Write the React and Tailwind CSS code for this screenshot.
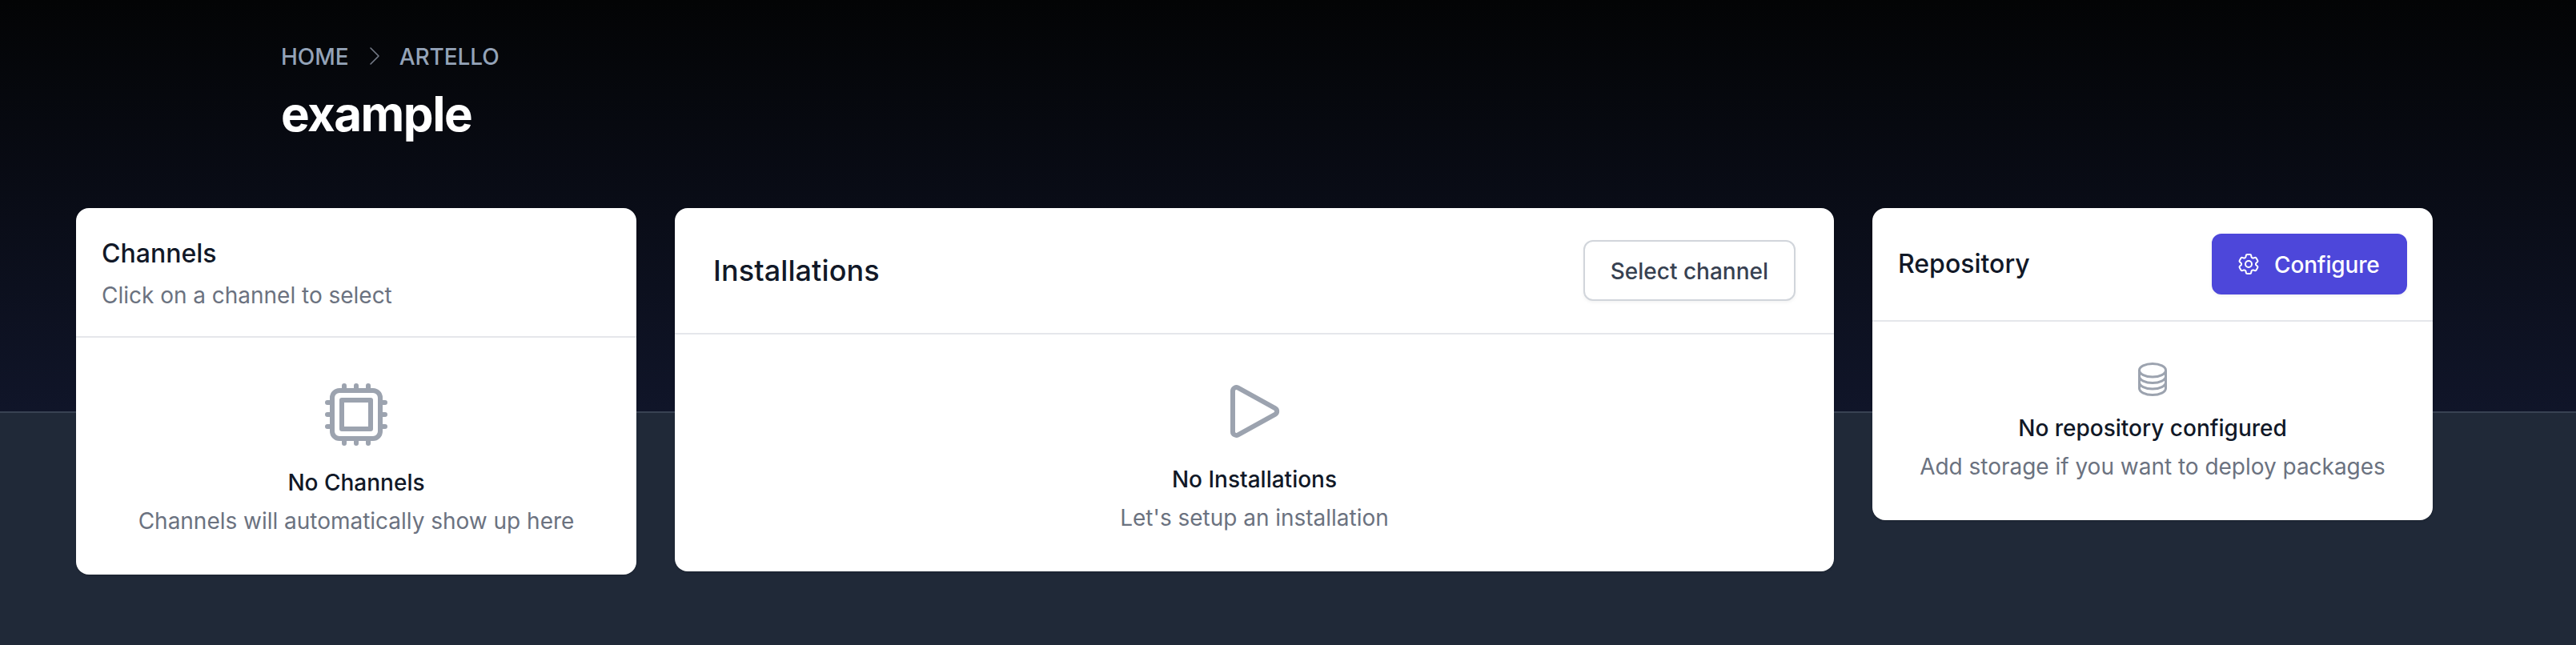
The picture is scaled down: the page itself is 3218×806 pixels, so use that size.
import React from 'react';

const ICONS = {
  chip: 'M8.25 3v1.5M4.5 8.25H3m18 0h-1.5M4.5 12H3m18 0h-1.5m-15 3.75H3m18 0h-1.5M8.25 19.5V21M12 3v1.5m0 15V21m3.75-18v1.5m0 15V21m-9-1.5h10.5a2.25 2.25 0 002.25-2.25V6.75a2.25 2.25 0 00-2.25-2.25H6.75A2.25 2.25 0 004.5 6.75v10.5a2.25 2.25 0 002.25 2.25zm.75-12h9v9h-9v-9z',
  play: 'M5.25 5.653c0-.856.917-1.398 1.667-.986l11.54 6.348a1.125 1.125 0 010 1.971l-11.54 6.347a1.125 1.125 0 01-1.667-.985V5.653z',
  stack: 'M20.25 6.375c0 2.278-3.694 4.125-8.25 4.125S3.75 8.653 3.75 6.375m16.5 0c0-2.278-3.694-4.125-8.25-4.125S3.75 4.097 3.75 6.375m16.5 0v11.25c0 2.278-3.694 4.125-8.25 4.125s-8.25-1.847-8.25-4.125V6.375m16.5 0v3.75m-16.5-3.75v3.75m16.5 0v3.75C20.25 16.153 16.556 18 12 18s-8.25-1.847-8.25-4.125v-3.75m16.5 0c0 2.278-3.694 4.125-8.25 4.125s-8.25-1.847-8.25-4.125',
  cog: 'M9.594 3.94c.09-.542.56-.94 1.11-.94h2.593c.55 0 1.02.398 1.11.94l.213 1.281c.063.374.313.686.645.87.074.04.147.083.22.127.324.196.72.257 1.075.124l1.217-.456a1.125 1.125 0 011.37.49l1.296 2.247a1.125 1.125 0 01-.26 1.431l-1.003.827c-.293.24-.438.613-.431.992a6.759 6.759 0 010 .255c-.007.378.138.75.43.99l1.005.828c.424.35.534.954.26 1.43l-1.298 2.247a1.125 1.125 0 01-1.369.491l-1.217-.456c-.355-.133-.75-.072-1.076.124a6.57 6.57 0 01-.22.128c-.331.183-.581.495-.644.869l-.213 1.28c-.09.543-.56.941-1.11.941h-2.594c-.55 0-1.02-.398-1.11-.94l-.213-1.281c-.062-.374-.312-.686-.644-.87a6.52 6.52 0 01-.22-.127c-.325-.196-.72-.257-1.076-.124l-1.217.456a1.125 1.125 0 01-1.369-.49l-1.297-2.247a1.125 1.125 0 01.26-1.431l1.004-.827c.292-.24.437-.613.43-.992a6.932 6.932 0 010-.255c.007-.378-.138-.75-.43-.99l-1.004-.828a1.125 1.125 0 01-.26-1.43l1.297-2.247a1.125 1.125 0 011.37-.491l1.216.456c.356.133.751.072 1.076-.124.072-.044.146-.087.22-.128.332-.183.582-.495.644-.869l.214-1.281z M15 12a3 3 0 11-6 0 3 3 0 016 0z',
  chevron: 'M8.25 4.5l7.5 7.5-7.5 7.5',
};

function Icon({ name, className, strokeWidth = 1.5 }) {
  return (
    <svg className={className} viewBox="0 0 24 24" fill="none" stroke="currentColor" strokeWidth={strokeWidth} strokeLinecap="round" strokeLinejoin="round" aria-hidden="true">
      <path d={ICONS[name]} />
    </svg>
  );
}

function EmptyState({ icon, iconClass, title, text }) {
  return (
    <div className="flex flex-col items-center pt-12 pb-[47px] text-[28px] leading-10">
      <Icon name={icon} className={iconClass} />
      <h3 className="mt-[17px] font-medium text-[#111827]">{title}</h3>
      <p className="mt-2 tracking-[-0.02px] text-[#6b7280]">{text}</p>
    </div>
  );
}

const CARD = 'overflow-hidden rounded-2xl bg-white shadow';

export default function App() {
  return (
    <div className="grid h-[806px] w-[3218px] grid-rows-[516px_1fr] bg-[#202938] font-['Inter',sans-serif]">
      <div className="col-start-1 row-start-1 border-b-2 border-[#384252] bg-[linear-gradient(to_bottom,#030405,#101529)]" />
      <div className="col-start-1 row-span-2 row-start-1">
        <header className="h-[260px] pt-[51px] pl-[351px]">
          <nav className="flex items-center text-[28px] leading-10 font-medium text-[#94a3b8]">
            <a>HOME</a>
            <Icon name="chevron" className="-mt-0.5 mr-[15px] ml-4 size-8 text-[#757b88]" strokeWidth={1.2} />
            <a className="tracking-[-0.1px]">ARTELLO</a>
          </nav>
          <h1 className="mt-[15px] text-[60px] leading-[72px] font-bold tracking-tight text-white">example</h1>
        </header>
        <main className="flex items-start gap-12 pl-[95px]">
          <section className={`${CARD} w-[700px]`}>
            <div className="border-b-2 border-[#e5e7eb] px-8 pt-[33px] pb-[31px]">
              <h2 className="text-[32px] leading-[48px] font-medium text-[#111827]">Channels</h2>
              <p className="mt-2 text-[28px] leading-10 tracking-[-0.02px] text-[#6b7280]">Click on a channel to select</p>
            </div>
            <EmptyState icon="chip" iconClass="size-24 text-[#9ca3af]" title="No Channels" text="Channels will automatically show up here" />
          </section>
          <section className={`${CARD} w-[1448px]`}>
            <div className="flex items-center justify-between border-b-2 border-[#e5e7eb] px-12 py-10">
              <h2 className="text-[36px] leading-[48px] font-medium tracking-[0.1px] text-[#111827]">Installations</h2>
              <button className="rounded-xl border-2 border-[#d1d5db] bg-white px-8 pt-[17px] pb-[15px] text-[28px] leading-10 font-medium text-[#374151] shadow-[0_2px_4px_rgba(0,0,0,0.05)]">Select channel</button>
            </div>
            <EmptyState icon="play" iconClass="size-24 text-[#9ca3af]" title="No Installations" text="Let's setup an installation" />
          </section>
          <section className={`${CARD} w-[700px]`}>
            <div className="flex items-center justify-between border-b-2 border-[#e5e7eb] px-8 py-8">
              <h2 className="text-[32px] leading-[48px] font-medium text-[#111827]">Repository</h2>
              <button className="flex w-[244px] items-center rounded-xl border-2 border-[#4d47da] bg-[#4d47da] px-8 text-[28px] leading-10 font-medium text-white shadow-[0_2px_4px_rgba(0,0,0,0.05)]">
                <Icon name="cog" className="mr-4 -ml-1 size-8 shrink-0" />
                <span className="pt-[17px] pb-[15px] tracking-[-0.15px]">Configure</span>
              </button>
            </div>
            <EmptyState icon="stack" iconClass="size-12 text-[#9ca3af]" title="No repository configured" text="Add storage if you want to deploy packages" />
          </section>
        </main>
      </div>
    </div>
  );
}
